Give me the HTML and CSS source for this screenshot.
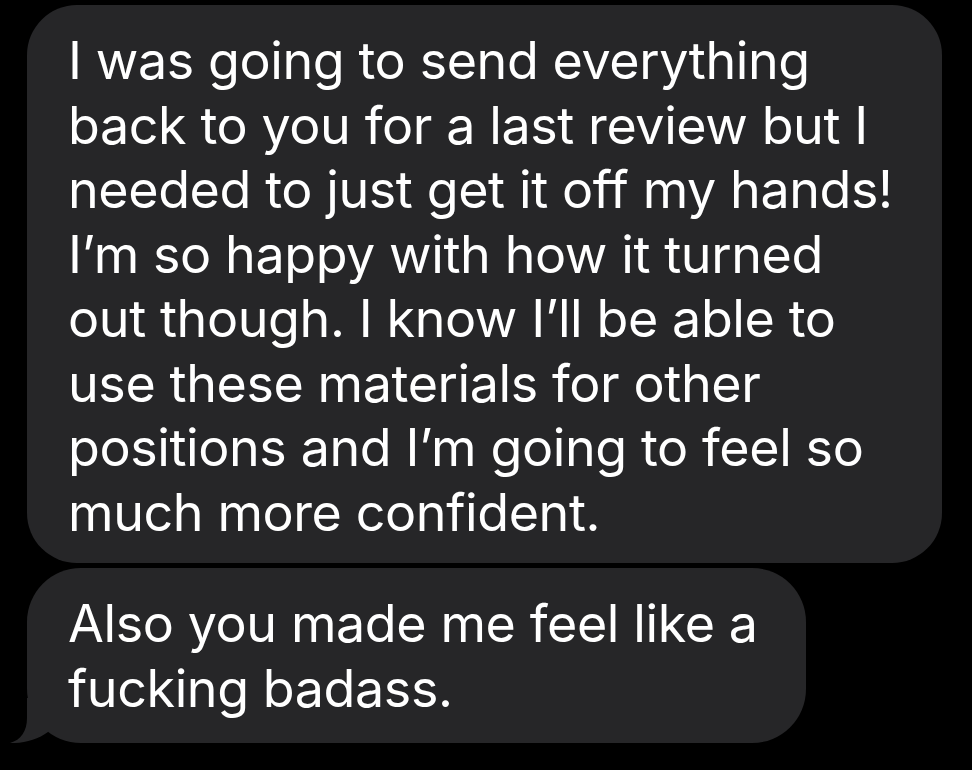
FILE: index.html
```html
<!DOCTYPE html>
<html>
<head>
<meta charset="utf-8">
<link rel="stylesheet" href="styles.css">
</head>
<body>
<div class="thread">
  <div class="bubble bubble-long">
    <p class="msg">I was going to send everything<br>back to you for a last review but I<br>needed to just get it off my hands!<br>I’m so happy with how it turned<br>out though. I know I’ll be able to<br>use these materials for other<br>positions and I’m going to feel so<br>much more confident.</p>
  </div>
  <div class="bubble bubble-short">
    <p class="msg">Also you made me feel like a<br>fucking badass.</p>
    <svg class="tail" width="45" height="45" viewBox="0 0 45 45" aria-hidden="true">
      <path d="M17 0 L17 20 C17 33 11 42 0 45 C14 45.5 28 41.5 38 34 L38 0 Z" fill="#262628"/>
    </svg>
  </div>
</div>
</body>
</html>
```

FILE: styles.css
```css
html, body {
  margin: 0;
  padding: 0;
  background: #000;
}

body {
  width: 972px;
  height: 770px;
  overflow: hidden;
  font-family: "Inter", "Noto Sans", sans-serif;
  -webkit-font-smoothing: antialiased;
}

.thread {
  display: flex;
  flex-direction: column;
  align-items: flex-start;
  gap: 5px;
  padding: 5px 0 0 27px;
}

.bubble {
  position: relative;
  background: #262628;
  border-radius: 50px;
  box-sizing: border-box;
  padding: 0 0 0 41px;
  color: #fff;
}

.bubble-long {
  width: 915px;
  height: 558px;
  padding-top: 24px;
}

.bubble-short {
  width: 779px;
  height: 175px;
  padding-top: 24px;
  border-radius: 54px;
}

.msg {
  margin: 0;
  font-size: 52px;
  line-height: 64.5px;
  letter-spacing: -0.4px;
  white-space: nowrap;
  font-weight: 400;
}

.tail {
  position: absolute;
  left: -17px;
  bottom: 0;
  display: block;
}
```
